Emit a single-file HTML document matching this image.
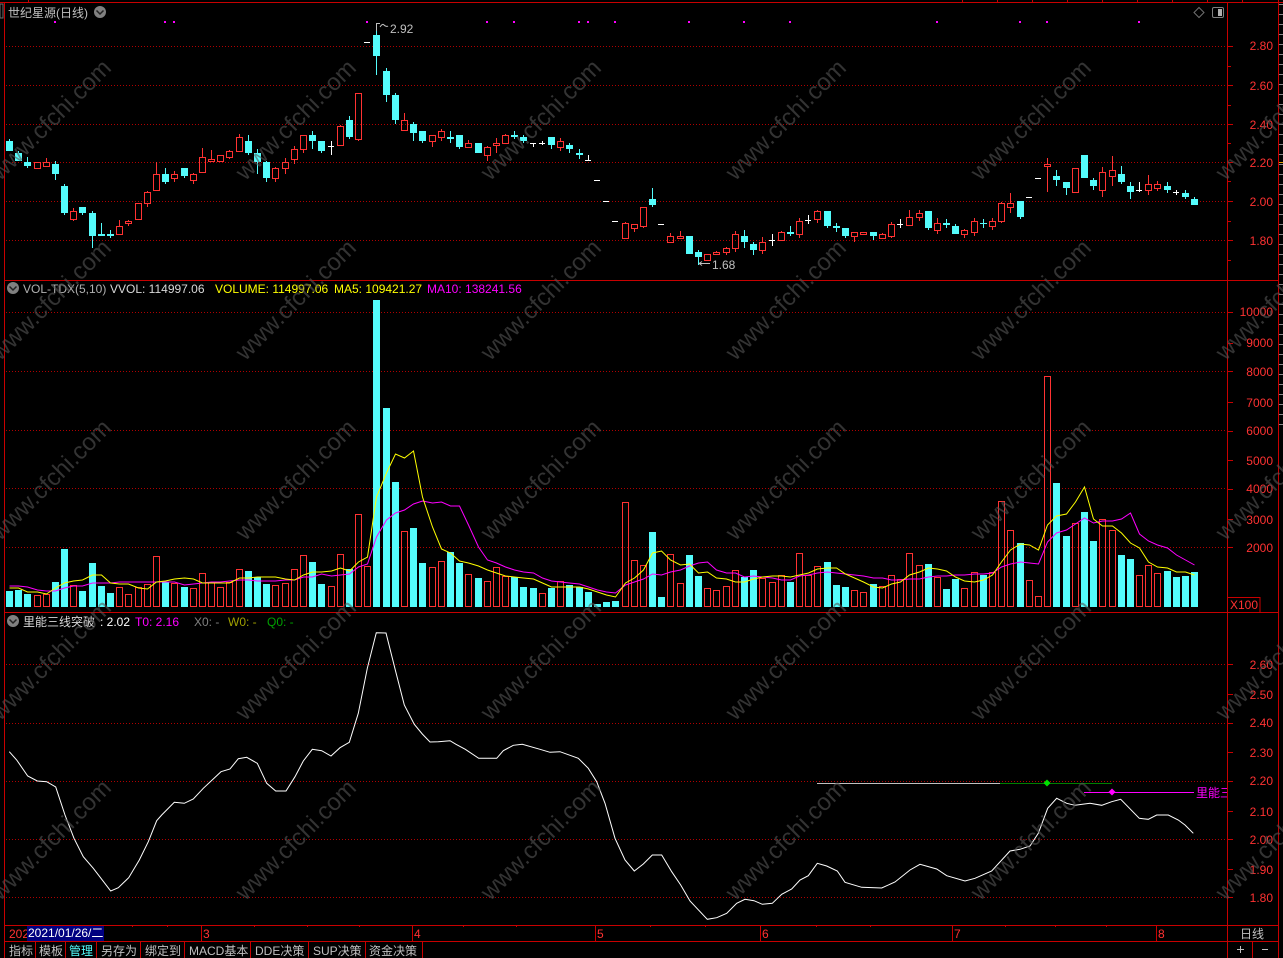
<!DOCTYPE html>
<html lang="zh">
<head>
<meta charset="utf-8">
<title>世纪星源(日线)</title>
<style>
html,body{margin:0;padding:0;background:#000;width:1283px;height:958px;overflow:hidden}
svg{display:block;position:absolute;left:0;top:0}
text{font-family:"Liberation Sans","Noto Sans CJK SC",sans-serif;font-size:12px}
.r{fill:#ff3232}
.ax text{fill:#ff3232;text-anchor:end}
.wm text{font-size:24px;fill:#555;text-anchor:middle;opacity:.6}
</style>
</head>
<body>
<svg width="1283" height="958" viewBox="0 0 1283 958" xmlns="http://www.w3.org/2000/svg">
<defs><clipPath id="c1"><rect x="1190" y="780" width="37" height="24"/></clipPath></defs>
<rect width="1283" height="958" fill="#000"/>

<!-- grid -->
<g stroke="#b00000" stroke-width="1" stroke-dasharray="1 2" fill="none" shape-rendering="crispEdges">
<path d="M6 46.5H1226M6 85.5H1226M6 124.5H1226M6 162.5H1226M6 201.5H1226M6 240.5H1226"/>
<path d="M6 312.5H1226M6 371.5H1226M6 430.5H1226M6 488.5H1226M6 547.5H1226"/>
<path d="M6 664.5H1226M6 723.5H1226M6 781.5H1226M6 839.5H1226M6 897.5H1226"/>
</g>

<!-- frame -->
<g stroke="#c80000" stroke-width="1" fill="none" shape-rendering="crispEdges">
<path d="M0 2.5H1283" stroke-width="1"/>
<path d="M4.5 2V958"/>
<path d="M5 280.5H1278M5 612.5H1278M5 925.5H1278M5 941.5H1278"/>
<path d="M1227.5 2V958M1278.5 0V958M1252.5 941V958"/>
<path d="M28.5 0V2M962.5 0V2M997.5 0V2M1032.5 0V2M1067.5 0V2M1102.5 0V2M1137.5 0V2M1172.5 0V2M1207.5 0V2M1242.5 0V2"/>
<path d="M1228 46.5h5M1228 85.5h5M1228 124.5h5M1228 162.5h5M1228 201.5h5M1228 240.5h5M1228 66.5h3M1228 105.5h3M1228 143.5h3M1228 181.5h3M1228 221.5h3M1228 260.5h3"/>
<path d="M1228 312.5h5M1228 343.5h5M1228 371.5h5M1228 402.5h5M1228 431.5h5M1228 460.5h5M1228 489.5h5M1228 519.5h5M1228 547.5h5"/>
<path d="M1228 664.5h5M1228 694.5h5M1228 723.5h5M1228 752.5h5M1228 781.5h5M1228 811.5h5M1228 839.5h5M1228 869.5h5M1228 897.5h5"/>
<path d="M201.5 925V941M412.5 925V941M595.5 925V941M760.5 925V941M952.5 925V941M1156.5 925V941"/>
<path d="M132.5 925v2M167.5 925v2M254.5 925v2M307.5 925v2M359.5 925v2M463.5 925v2M516.5 925v2M650.5 925v2M705.5 925v2M816.5 925v2M870.5 925v2M1005.5 925v2M1055.5 925v2M1106.5 925v2"/>
<path d="M35.5 941V958M65.5 941V958M96.5 941V958M140.5 941V958M184.5 941V958M250.5 941V958M308.5 941V958M365.5 941V958M422.5 941V958"/>
<path d="M1228 597.5h32V612"/>
</g>
<line x1="1281" y1="4" x2="1281" y2="425" stroke="#888" stroke-width="4" stroke-dasharray="1 9" shape-rendering="crispEdges"/>
<rect x="1279" y="162" width="4" height="1" fill="#e0a000"/>
<rect x="0" y="4" width="3" height="14" fill="none" stroke="#707070"/>

<!-- magenta marks -->
<path fill="#ff00ff" d="M54 21h2v2h-2zM164 21h2v2h-2zM173 21h2v2h-2zM366 21h2v2h-2zM486 21h2v2h-2zM513 21h2v2h-2zM578 21h2v2h-2zM587 21h2v2h-2zM614 21h2v2h-2zM688 21h2v2h-2zM743 21h2v2h-2zM789 21h2v2h-2zM936 21h2v2h-2zM1019 21h2v2h-2zM1046 21h2v2h-2zM1138 21h2v2h-2z"/>

<!-- candles: wicks -->
<path shape-rendering="crispEdges" fill="none" stroke="#54fcfc" stroke-width="1" d="M9.5 139V151M18.5 151V161M27.5 157V168M55.5 161V180M64.5 184V215M82.5 207V215M92.5 211V248M101.5 223V236M110.5 230V238M165.5 168V184M184.5 168V178M248.5 135V155M257.5 149V174M266.5 161V182M312.5 131V149M321.5 141V153M349.5 116V139M376.5 25V75M386.5 68V102M395.5 93V124M413.5 122V141M422.5 131V143M450.5 131V143M459.5 135V149M514.5 131V139M523.5 135V143M551.5 137V149M569.5 143V153M579.5 149V159M652.5 188V207M698.5 250V265M744.5 230V248M753.5 242V255M790.5 226V236M827.5 211V228M836.5 223V232M845.5 228V238M873.5 232V240M928.5 211V230M946.5 219V228M955.5 224V234M983.5 219V228M1020.5 201V219M1056.5 170V186M1066.5 182V195M1093.5 178V190M1121.5 166V184M1130.5 182V199M1167.5 182V193M1185.5 190V199M1194.5 197V205"/>
<path fill="#54fcfc" d="M6 141h7V151h-7zM15 153h7V161h-7zM24 162h7V166h-7zM52 164h7V174h-7zM61 186h7V213h-7zM79 207h7V213h-7zM89 213h7V236h-7zM98 234h7V236h-7zM107 234h7V236h-7zM162 174h7V182h-7zM181 168h7V176h-7zM245 141h7V153h-7zM254 153h7V162h-7zM263 162h7V178h-7zM309 135h7V141h-7zM318 141h7V151h-7zM346 120h7V137h-7zM373 35h7V56h-7zM383 71h7V95h-7zM392 95h7V120h-7zM410 124h7V133h-7zM419 131h7V141h-7zM447 137h7V139h-7zM456 135h7V147h-7zM475 143h7V153h-7zM511 135h7V137h-7zM520 137h7V141h-7zM548 137h7V145h-7zM566 145h7V149h-7zM576 153h7V155h-7zM649 199h7V205h-7zM686 236h7V254h-7zM695 252h7V257h-7zM741 236h7V242h-7zM750 244h7V250h-7zM787 232h7V234h-7zM824 211h7V226h-7zM833 226h7V228h-7zM842 228h7V236h-7zM870 232h7V236h-7zM925 211h7V228h-7zM943 223h7V225h-7zM952 226h7V234h-7zM980 223h7V224h-7zM1017 201h7V217h-7zM1053 176h7V180h-7zM1063 182h7V188h-7zM1081 155h7V178h-7zM1090 180h7V186h-7zM1118 174h7V182h-7zM1127 186h7V192h-7zM1164 186h7V190h-7zM1182 193h7V197h-7zM1191 199h7V205h-7z"/>
<path shape-rendering="crispEdges" fill="none" stroke="#ff3232" stroke-width="1" d="M46.5 158V162M73.5 208V211M73.5 220V221M119.5 220V226M128.5 220V221M128.5 224V226M147.5 191V192M147.5 204V207M156.5 162V174M174.5 171V174M174.5 179V182M193.5 173V174M193.5 181V184M202.5 148V157M211.5 150V159M229.5 150V151M229.5 158V159M239.5 134V137M275.5 167V168M275.5 179V182M285.5 158V162M285.5 169V174M294.5 146V149M294.5 160V164M303.5 150V153M340.5 125V126M358.5 140V141M404.5 113V120M432.5 142V147M441.5 129V131M441.5 138V141M468.5 140V143M487.5 146V147M487.5 156V161M496.5 138V143M496.5 146V153M505.5 134V135M560.5 138V141M560.5 148V151M625.5 222V223M634.5 229V232M643.5 227V228M670.5 233V236M680.5 231V236M716.5 251V252M726.5 247V248M726.5 253V255M735.5 231V234M735.5 249V252M762.5 237V242M762.5 251V254M781.5 231V232M799.5 218V221M799.5 235V238M817.5 210V211M817.5 220V223M854.5 237V242M882.5 233V234M891.5 222V224M891.5 237V238M909.5 210V217M919.5 210V213M919.5 218V221M937.5 218V223M937.5 231V234M964.5 229V230M964.5 235V238M974.5 218V221M974.5 233V236M992.5 218V221M992.5 227V230M1001.5 202V203M1001.5 222V223M1010.5 193V203M1010.5 208V213M1047.5 158V164M1047.5 167V192M1102.5 167V172M1102.5 191V197M1112.5 156V170M1112.5 177V186M1148.5 175V184M1148.5 191V195M1157.5 181V184M1157.5 189V191"/>
<path shape-rendering="crispEdges" fill="none" stroke="#ff3232" stroke-width="1" d="M34.5 162.5h6v6h-6zM43.5 162.5h6v4h-6zM70.5 211.5h6v8h-6zM116.5 226.5h6v8h-6zM125.5 221.5h6v2h-6zM135.5 203.5h6v16h-6zM144.5 192.5h6v11h-6zM153.5 174.5h6v16h-6zM171.5 174.5h6v4h-6zM190.5 174.5h6v6h-6zM199.5 157.5h6v15h-6zM208.5 159.5h6v2h-6zM217.5 155.5h6v6h-6zM226.5 151.5h6v6h-6zM236.5 137.5h6v14h-6zM272.5 168.5h6v10h-6zM282.5 162.5h6v6h-6zM291.5 149.5h6v10h-6zM300.5 135.5h6v14h-6zM337.5 126.5h6v19h-6zM355.5 93.5h6v46h-6zM401.5 120.5h6v10h-6zM429.5 135.5h6v6h-6zM438.5 131.5h6v6h-6zM465.5 143.5h6v4h-6zM484.5 147.5h6v8h-6zM493.5 143.5h6v2h-6zM502.5 135.5h6v8h-6zM557.5 141.5h6v6h-6zM622.5 223.5h6v15h-6zM631.5 224.5h6v4h-6zM640.5 207.5h6v19h-6zM667.5 236.5h6v6h-6zM677.5 236.5h6v2h-6zM704.5 254.5h6v6h-6zM713.5 252.5h6v2h-6zM723.5 248.5h6v4h-6zM732.5 234.5h6v14h-6zM759.5 242.5h6v8h-6zM778.5 232.5h6v8h-6zM796.5 221.5h6v13h-6zM814.5 211.5h6v8h-6zM851.5 232.5h6v4h-6zM860.5 232.5h6v2h-6zM879.5 234.5h6v4h-6zM888.5 224.5h6v12h-6zM906.5 217.5h6v8h-6zM916.5 213.5h6v4h-6zM934.5 223.5h6v7h-6zM961.5 230.5h6v4h-6zM971.5 221.5h6v11h-6zM989.5 221.5h6v5h-6zM998.5 203.5h6v18h-6zM1007.5 203.5h6v4h-6zM1044.5 164.5h6v2h-6zM1072.5 168.5h6v24h-6zM1099.5 172.5h6v18h-6zM1109.5 170.5h6v6h-6zM1145.5 184.5h6v6h-6zM1154.5 184.5h6v4h-6z"/>
<path shape-rendering="crispEdges" fill="none" stroke="#fff" stroke-width="1" d="M364 42.5h6M328 146.5h6M331.5 141V155M530 143.5h6M533.5 143V147M539 143.5h6M542.5 141V145M585 160.5h6M588.5 155V161M594 180.5h6M603 201.5h6M612 221.5h6M658 224.5h6M769 240.5h6M772.5 234V246M805 220.5h6M808.5 215V224M897 224.5h6M900.5 219V228M1026 197.5h6M1035 178.5h6M1136 190.5h6M1139.5 182V192M1173 192.5h6M1176.5 190V195"/>

<!-- high/low flags -->
<path fill="none" stroke="#c0c0c0" d="M376.5 31V23.5H380M380 27c2-3 3-3 4-2s3 2 4 1"/>
<text x="390" y="33" fill="#c0c0c0">2.92</text>
<path fill="none" stroke="#c0c0c0" d="M710 263.5H699M699 263.5l3-2M699 263.5l3 2"/>
<text x="712" y="269" fill="#c0c0c0">1.68</text>

<!-- volume bars -->
<path fill="#54fcfc" d="M6 591h7V607h-7zM15 590h7V607h-7zM24 594h7V607h-7zM52 582h7V607h-7zM61 549h7V607h-7zM79 591h7V607h-7zM89 563h7V607h-7zM98 586h7V607h-7zM107 593h7V607h-7zM162 582h7V607h-7zM181 587h7V607h-7zM245 571h7V607h-7zM254 577h7V607h-7zM263 584h7V607h-7zM309 562h7V607h-7zM318 584h7V607h-7zM346 569h7V607h-7zM373 300h7V607h-7zM383 408h7V607h-7zM392 482h7V607h-7zM410 528h7V607h-7zM419 563h7V607h-7zM447 552h7V607h-7zM456 563h7V607h-7zM475 578h7V607h-7zM511 577h7V607h-7zM520 587h7V607h-7zM530 588h7V607h-7zM548 588h7V607h-7zM566 585h7V607h-7zM576 587h7V607h-7zM585 592h7V607h-7zM594 604h7V607h-7zM603 602h7V607h-7zM612 601h7V607h-7zM649 532h7V607h-7zM658 597h7V607h-7zM686 555h7V607h-7zM695 576h7V607h-7zM741 577h7V607h-7zM750 570h7V607h-7zM787 582h7V607h-7zM824 562h7V607h-7zM833 585h7V607h-7zM842 587h7V607h-7zM870 584h7V607h-7zM925 564h7V607h-7zM943 589h7V607h-7zM952 579h7V607h-7zM980 575h7V607h-7zM1017 543h7V607h-7zM1053 483h7V607h-7zM1063 536h7V607h-7zM1081 512h7V607h-7zM1090 541h7V607h-7zM1118 555h7V607h-7zM1127 559h7V607h-7zM1164 571h7V607h-7zM1173 577h7V607h-7zM1182 576h7V607h-7zM1191 572h7V607h-7z"/>
<path shape-rendering="crispEdges" fill="none" stroke="#ff3232" stroke-width="1" d="M34.5 595.5h6V606.5h-6zM43.5 594.5h6V606.5h-6zM70.5 585.5h6V606.5h-6zM116.5 587.5h6V606.5h-6zM125.5 594.5h6V606.5h-6zM135.5 587.5h6V606.5h-6zM144.5 584.5h6V606.5h-6zM153.5 556.5h6V606.5h-6zM171.5 583.5h6V606.5h-6zM190.5 588.5h6V606.5h-6zM199.5 573.5h6V606.5h-6zM208.5 582.5h6V606.5h-6zM217.5 587.5h6V606.5h-6zM226.5 582.5h6V606.5h-6zM236.5 569.5h6V606.5h-6zM272.5 585.5h6V606.5h-6zM282.5 583.5h6V606.5h-6zM291.5 569.5h6V606.5h-6zM300.5 555.5h6V606.5h-6zM328.5 586.5h6V606.5h-6zM337.5 554.5h6V606.5h-6zM355.5 514.5h6V606.5h-6zM364.5 566.5h6V606.5h-6zM401.5 531.5h6V606.5h-6zM429.5 567.5h6V606.5h-6zM438.5 561.5h6V606.5h-6zM465.5 574.5h6V606.5h-6zM484.5 581.5h6V606.5h-6zM493.5 567.5h6V606.5h-6zM502.5 576.5h6V606.5h-6zM539.5 593.5h6V606.5h-6zM557.5 581.5h6V606.5h-6zM622.5 502.5h6V606.5h-6zM631.5 560.5h6V606.5h-6zM640.5 565.5h6V606.5h-6zM667.5 554.5h6V606.5h-6zM677.5 583.5h6V606.5h-6zM704.5 588.5h6V606.5h-6zM713.5 590.5h6V606.5h-6zM723.5 586.5h6V606.5h-6zM732.5 570.5h6V606.5h-6zM759.5 578.5h6V606.5h-6zM769.5 582.5h6V606.5h-6zM778.5 575.5h6V606.5h-6zM796.5 553.5h6V606.5h-6zM805.5 575.5h6V606.5h-6zM814.5 566.5h6V606.5h-6zM851.5 590.5h6V606.5h-6zM860.5 592.5h6V606.5h-6zM879.5 586.5h6V606.5h-6zM888.5 575.5h6V606.5h-6zM897.5 579.5h6V606.5h-6zM906.5 553.5h6V606.5h-6zM916.5 565.5h6V606.5h-6zM934.5 577.5h6V606.5h-6zM961.5 588.5h6V606.5h-6zM971.5 572.5h6V606.5h-6zM989.5 572.5h6V606.5h-6zM998.5 501.5h6V606.5h-6zM1007.5 530.5h6V606.5h-6zM1026.5 580.5h6V606.5h-6zM1035.5 596.5h6V606.5h-6zM1044.5 376.5h6V606.5h-6zM1072.5 523.5h6V606.5h-6zM1099.5 519.5h6V606.5h-6zM1109.5 530.5h6V606.5h-6zM1136.5 575.5h6V606.5h-6zM1145.5 565.5h6V606.5h-6zM1154.5 573.5h6V606.5h-6z"/>

<!-- MA10 -->
<polyline fill="none" stroke="#ff00ff" stroke-width="1" points="9.5,586 18.5,586 27.5,587 37.5,590 46.5,591 55.5,591 64.5,588 73.5,586 82.5,586 92.5,583 101.5,583 110.5,583 119.5,582 128.5,582 138.5,582 147.5,582 156.5,582 165.5,582 174.5,582 184.5,585 193.5,584 202.5,583 211.5,582 220.5,582 229.5,581 239.5,580 248.5,580 257.5,581 266.5,581 275.5,581 285.5,580 294.5,580 303.5,577 312.5,577 321.5,574 331.5,576 340.5,575 349.5,574 358.5,567 367.5,564 376.5,537 386.5,520 395.5,513 404.5,510 413.5,504 422.5,501 432.5,503 441.5,502 450.5,506 459.5,506 468.5,525 478.5,547 487.5,560 496.5,563 505.5,567 514.5,570 523.5,572 533.5,573 542.5,578 551.5,581 560.5,582 569.5,583 579.5,584 588.5,587 597.5,590 606.5,592 615.5,593 625.5,585 634.5,582 643.5,579 652.5,574 661.5,575 670.5,572 680.5,570 689.5,566 698.5,563 707.5,562 716.5,570 726.5,573 735.5,573 744.5,577 753.5,576 762.5,577 772.5,578 781.5,580 790.5,580 799.5,576 808.5,575 817.5,573 827.5,572 836.5,573 845.5,574 854.5,575 863.5,576 873.5,578 882.5,578 891.5,580 900.5,580 909.5,579 919.5,579 928.5,577 937.5,576 946.5,576 955.5,575 964.5,575 974.5,574 983.5,574 992.5,573 1001.5,567 1010.5,564 1020.5,562 1029.5,563 1038.5,564 1047.5,542 1056.5,533 1066.5,530 1075.5,524 1084.5,518 1093.5,523 1102.5,521 1112.5,521 1121.5,519 1130.5,513 1139.5,534 1148.5,541 1157.5,545 1167.5,548 1176.5,555 1185.5,560 1194.5,565"/>
<!-- MA5 -->
<polyline fill="none" stroke="#ffff00" stroke-width="1" points="9.5,588 18.5,588 27.5,592 37.5,592 46.5,594 55.5,588 64.5,583 73.5,581 82.5,580 92.5,575 101.5,575 110.5,583 119.5,584 128.5,584 138.5,588 147.5,589 156.5,582 165.5,581 174.5,579 184.5,578 193.5,579 202.5,583 211.5,583 220.5,583 229.5,583 239.5,578 248.5,578 257.5,577 266.5,577 275.5,577 285.5,579 294.5,580 303.5,575 312.5,572 321.5,572 331.5,571 340.5,568 349.5,571 358.5,562 367.5,557 376.5,497 386.5,473 395.5,454 404.5,458 413.5,451 422.5,497 432.5,527 441.5,549 450.5,553 459.5,561 468.5,563 478.5,566 487.5,570 496.5,573 505.5,576 514.5,577 523.5,578 533.5,579 542.5,583 551.5,587 560.5,587 569.5,587 579.5,587 588.5,589 597.5,592 606.5,595 615.5,597 625.5,583 634.5,578 643.5,570 652.5,553 661.5,551 670.5,560 680.5,565 689.5,564 698.5,573 707.5,572 716.5,578 726.5,579 735.5,582 744.5,582 753.5,579 762.5,577 772.5,576 781.5,576 790.5,577 799.5,575 808.5,573 817.5,569 827.5,568 836.5,568 845.5,574 854.5,578 863.5,582 873.5,587 882.5,588 891.5,584 900.5,582 909.5,575 919.5,572 928.5,568 937.5,569 946.5,571 955.5,577 964.5,581 974.5,582 983.5,580 992.5,575 1001.5,562 1010.5,550 1020.5,544 1029.5,545 1038.5,550 1047.5,525 1056.5,516 1066.5,514 1075.5,502 1084.5,487 1093.5,519 1102.5,526 1112.5,526 1121.5,533 1130.5,543 1139.5,548 1148.5,562 1157.5,567 1167.5,568 1176.5,572 1185.5,572 1194.5,575"/>

<!-- panel 3 lines -->
<path shape-rendering="crispEdges" fill="none" d="M817 783.5H1000" stroke="#c0c0c0"/>
<path shape-rendering="crispEdges" fill="none" d="M1000 783.5H1112" stroke="#008000"/>
<path shape-rendering="crispEdges" fill="none" d="M1084 792.5H1194" stroke="#ff00ff"/>
<path fill="#00e000" d="M1047 779.5l3.5 3.5-3.5 3.5-3.5-3.5z"/>
<path fill="#ff00ff" d="M1112 788.5l3.5 3.5-3.5 3.5-3.5-3.5z"/>
<text x="1196" y="797" fill="#ff00ff" clip-path="url(#c1)">里能三线突破</text>
<polyline fill="none" stroke="#fff" stroke-width="1" points="9.3,751.7 16.7,760 27.7,776 37.3,781 46.7,781.7 55.7,787 65,815 74,838.3 83.3,856.7 93.3,868.3 110.7,891 118.3,887.7 128.7,877.7 139.3,860 148.3,841.7 156.7,820.7 161.7,815 174.3,802.3 184.3,803.3 193.3,799 203.3,788.3 221,771.7 230,769 238.3,758.7 246.7,757.3 257.3,763.3 266.7,783.3 275.7,791 286,791 295,776.7 303.3,761 312.3,749.3 321.7,750.7 331,756 340,747.7 349.3,742.3 358.3,713.3 367.3,668.3 376.3,632.7 386,633 395.3,670 404.3,705 414.3,724.3 422.3,734 430,742 438.3,741.7 450,740.7 456,744.3 465.3,749.3 478.7,758.3 496.7,758.3 503.3,750.7 513.3,745.3 522.3,744.3 540,749.3 550,752.3 560,751.7 578.3,758.3 588.3,768.3 596.7,781.7 605,803.3 615,838.3 625,860 634.3,871 643.3,864 652.3,855 661.7,855 671.7,871.7 680.7,885 690,901 707.3,919.3 716.7,917.7 726.7,913.3 736.7,903.3 745,899.3 754,900.7 762.3,904.3 772.3,903.3 781.7,894.3 791.7,889 800,880 808.3,875.7 817.3,863.3 826.7,866 837.3,871 845,882.3 861.7,887.3 881.7,888 895,882 910,870 920,864.3 936.7,869 946.7,875.7 965,881 975,878.3 991.7,871 1010,851 1020,849.3 1030,846 1038.3,833.3 1047.7,808.3 1056.7,798.3 1066.7,803.3 1075,805.3 1090,803.3 1101.7,805.3 1111.7,801.7 1120.7,799.3 1139.3,818.3 1148.3,819.3 1156.7,815 1168.3,815 1178.3,820 1185,825 1193.3,833.3"/>

<!-- axis labels -->
<g class="ax">
<text x="1273" y="50">2.80</text><text x="1273" y="90">2.60</text><text x="1273" y="129">2.40</text><text x="1273" y="167">2.20</text><text x="1273" y="206">2.00</text><text x="1273" y="245">1.80</text>
<text x="1273" y="316">10000</text><text x="1273" y="347">9000</text><text x="1273" y="376">8000</text><text x="1273" y="407">7000</text><text x="1273" y="435">6000</text><text x="1273" y="465">5000</text><text x="1273" y="493">4000</text><text x="1273" y="524">3000</text><text x="1273" y="552">2000</text>
<text x="1273" y="669">2.60</text><text x="1273" y="699">2.50</text><text x="1273" y="727">2.40</text><text x="1273" y="757">2.30</text><text x="1273" y="785">2.20</text><text x="1273" y="816">2.10</text><text x="1273" y="844">2.00</text><text x="1273" y="874">1.90</text><text x="1273" y="902">1.80</text>
</g>
<text x="1230" y="609" class="r">X100</text>

<!-- headers -->
<text x="8" y="17" fill="#c0c0c0">世纪星源(日线)</text>
<circle cx="100" cy="12" r="6" fill="#808080"/><path d="M96.5 10.5l3.5 3.5 3.5-3.5" fill="none" stroke="#222" stroke-width="1.5"/>
<path d="M1199 7.5l5 5-5 5-5-5z" fill="none" stroke="#707070"/>
<rect x="1212.5" y="7.5" width="11" height="10" rx="1.5" fill="none" stroke="#808080"/><rect x="1218" y="9" width="4" height="7" fill="#b0b0b0"/>

<circle cx="13" cy="288" r="6" fill="#808080"/><path d="M9.5 286.5l3.5 3.5 3.5-3.5" fill="none" stroke="#222" stroke-width="1.5"/>
<text x="23" y="293" fill="#b0b0b0">VOL-TDX(5,10)</text>
<text x="110" y="293" fill="#d8d8d8">VVOL: 114997.06</text>
<text x="215" y="293" fill="#ffff00">VOLUME: 114997.06</text>
<text x="334" y="293" fill="#ffff00">MA5: 109421.27</text>
<text x="427" y="293" fill="#ff00ff">MA10: 138241.56</text>

<circle cx="13" cy="621" r="6" fill="#808080"/><path d="M9.5 619.5l3.5 3.5 3.5-3.5" fill="none" stroke="#222" stroke-width="1.5"/>
<text x="23" y="626" fill="#d8d8d8">里能三线突破</text>
<text x="100" y="626" fill="#fff">: 2.02</text>
<text x="135" y="626" fill="#ff00ff">T0: 2.16</text>
<text x="194" y="626" fill="#808080">X0: -</text>
<text x="228" y="626" fill="#a0a000">W0: -</text>
<text x="267" y="626" fill="#00a000">Q0: -</text>

<!-- time axis -->
<text x="9" y="938" class="r">2021</text>
<rect x="27" y="926" width="77" height="15" fill="#000080"/>
<text x="28" y="937" fill="#fff">2021/01/26/二</text>
<text x="203" y="938" class="r">3</text><text x="414" y="938" class="r">4</text><text x="597" y="938" class="r">5</text><text x="762" y="938" class="r">6</text><text x="954" y="938" class="r">7</text><text x="1158" y="938" class="r">8</text>
<text x="1240" y="938" fill="#c0c0c0">日线</text>

<!-- tabs -->
<g fill="#c0c0c0">
<text x="9" y="955">指标</text><text x="39" y="955">模板</text><text x="69" y="955" fill="#54fcfc">管理</text><text x="101" y="955">另存为</text><text x="145" y="955">绑定到</text><text x="189" y="955">MACD基本</text><text x="255" y="955">DDE决策</text><text x="313" y="955">SUP决策</text><text x="369" y="955">资金决策</text>
</g>
<path d="M1237 949.5h7M1240.5 946v7M1262 949.5h6" stroke="#c0c0c0" fill="none" shape-rendering="crispEdges"/>

<!-- watermark -->
<g class="wm" transform="translate(-1 1)">
<text x="51" y="127" transform="rotate(-45 51 118)">www.cfchi.com</text><text x="296" y="127" transform="rotate(-45 296 118)">www.cfchi.com</text><text x="541" y="127" transform="rotate(-45 541 118)">www.cfchi.com</text><text x="786" y="127" transform="rotate(-45 786 118)">www.cfchi.com</text><text x="1031" y="127" transform="rotate(-45 1031 118)">www.cfchi.com</text><text x="1276" y="127" transform="rotate(-45 1276 118)">www.cfchi.com</text>
<text x="51" y="307" transform="rotate(-45 51 298)">www.cfchi.com</text><text x="296" y="307" transform="rotate(-45 296 298)">www.cfchi.com</text><text x="541" y="307" transform="rotate(-45 541 298)">www.cfchi.com</text><text x="786" y="307" transform="rotate(-45 786 298)">www.cfchi.com</text><text x="1031" y="307" transform="rotate(-45 1031 298)">www.cfchi.com</text><text x="1276" y="307" transform="rotate(-45 1276 298)">www.cfchi.com</text>
<text x="51" y="487" transform="rotate(-45 51 478)">www.cfchi.com</text><text x="296" y="487" transform="rotate(-45 296 478)">www.cfchi.com</text><text x="541" y="487" transform="rotate(-45 541 478)">www.cfchi.com</text><text x="786" y="487" transform="rotate(-45 786 478)">www.cfchi.com</text><text x="1031" y="487" transform="rotate(-45 1031 478)">www.cfchi.com</text><text x="1276" y="487" transform="rotate(-45 1276 478)">www.cfchi.com</text>
<text x="51" y="667" transform="rotate(-45 51 658)">www.cfchi.com</text><text x="296" y="667" transform="rotate(-45 296 658)">www.cfchi.com</text><text x="541" y="667" transform="rotate(-45 541 658)">www.cfchi.com</text><text x="786" y="667" transform="rotate(-45 786 658)">www.cfchi.com</text><text x="1031" y="667" transform="rotate(-45 1031 658)">www.cfchi.com</text><text x="1276" y="667" transform="rotate(-45 1276 658)">www.cfchi.com</text>
<text x="51" y="847" transform="rotate(-45 51 838)">www.cfchi.com</text><text x="296" y="847" transform="rotate(-45 296 838)">www.cfchi.com</text><text x="541" y="847" transform="rotate(-45 541 838)">www.cfchi.com</text><text x="786" y="847" transform="rotate(-45 786 838)">www.cfchi.com</text><text x="1031" y="847" transform="rotate(-45 1031 838)">www.cfchi.com</text><text x="1276" y="847" transform="rotate(-45 1276 838)">www.cfchi.com</text>
</g>
</svg>
</body>
</html>
